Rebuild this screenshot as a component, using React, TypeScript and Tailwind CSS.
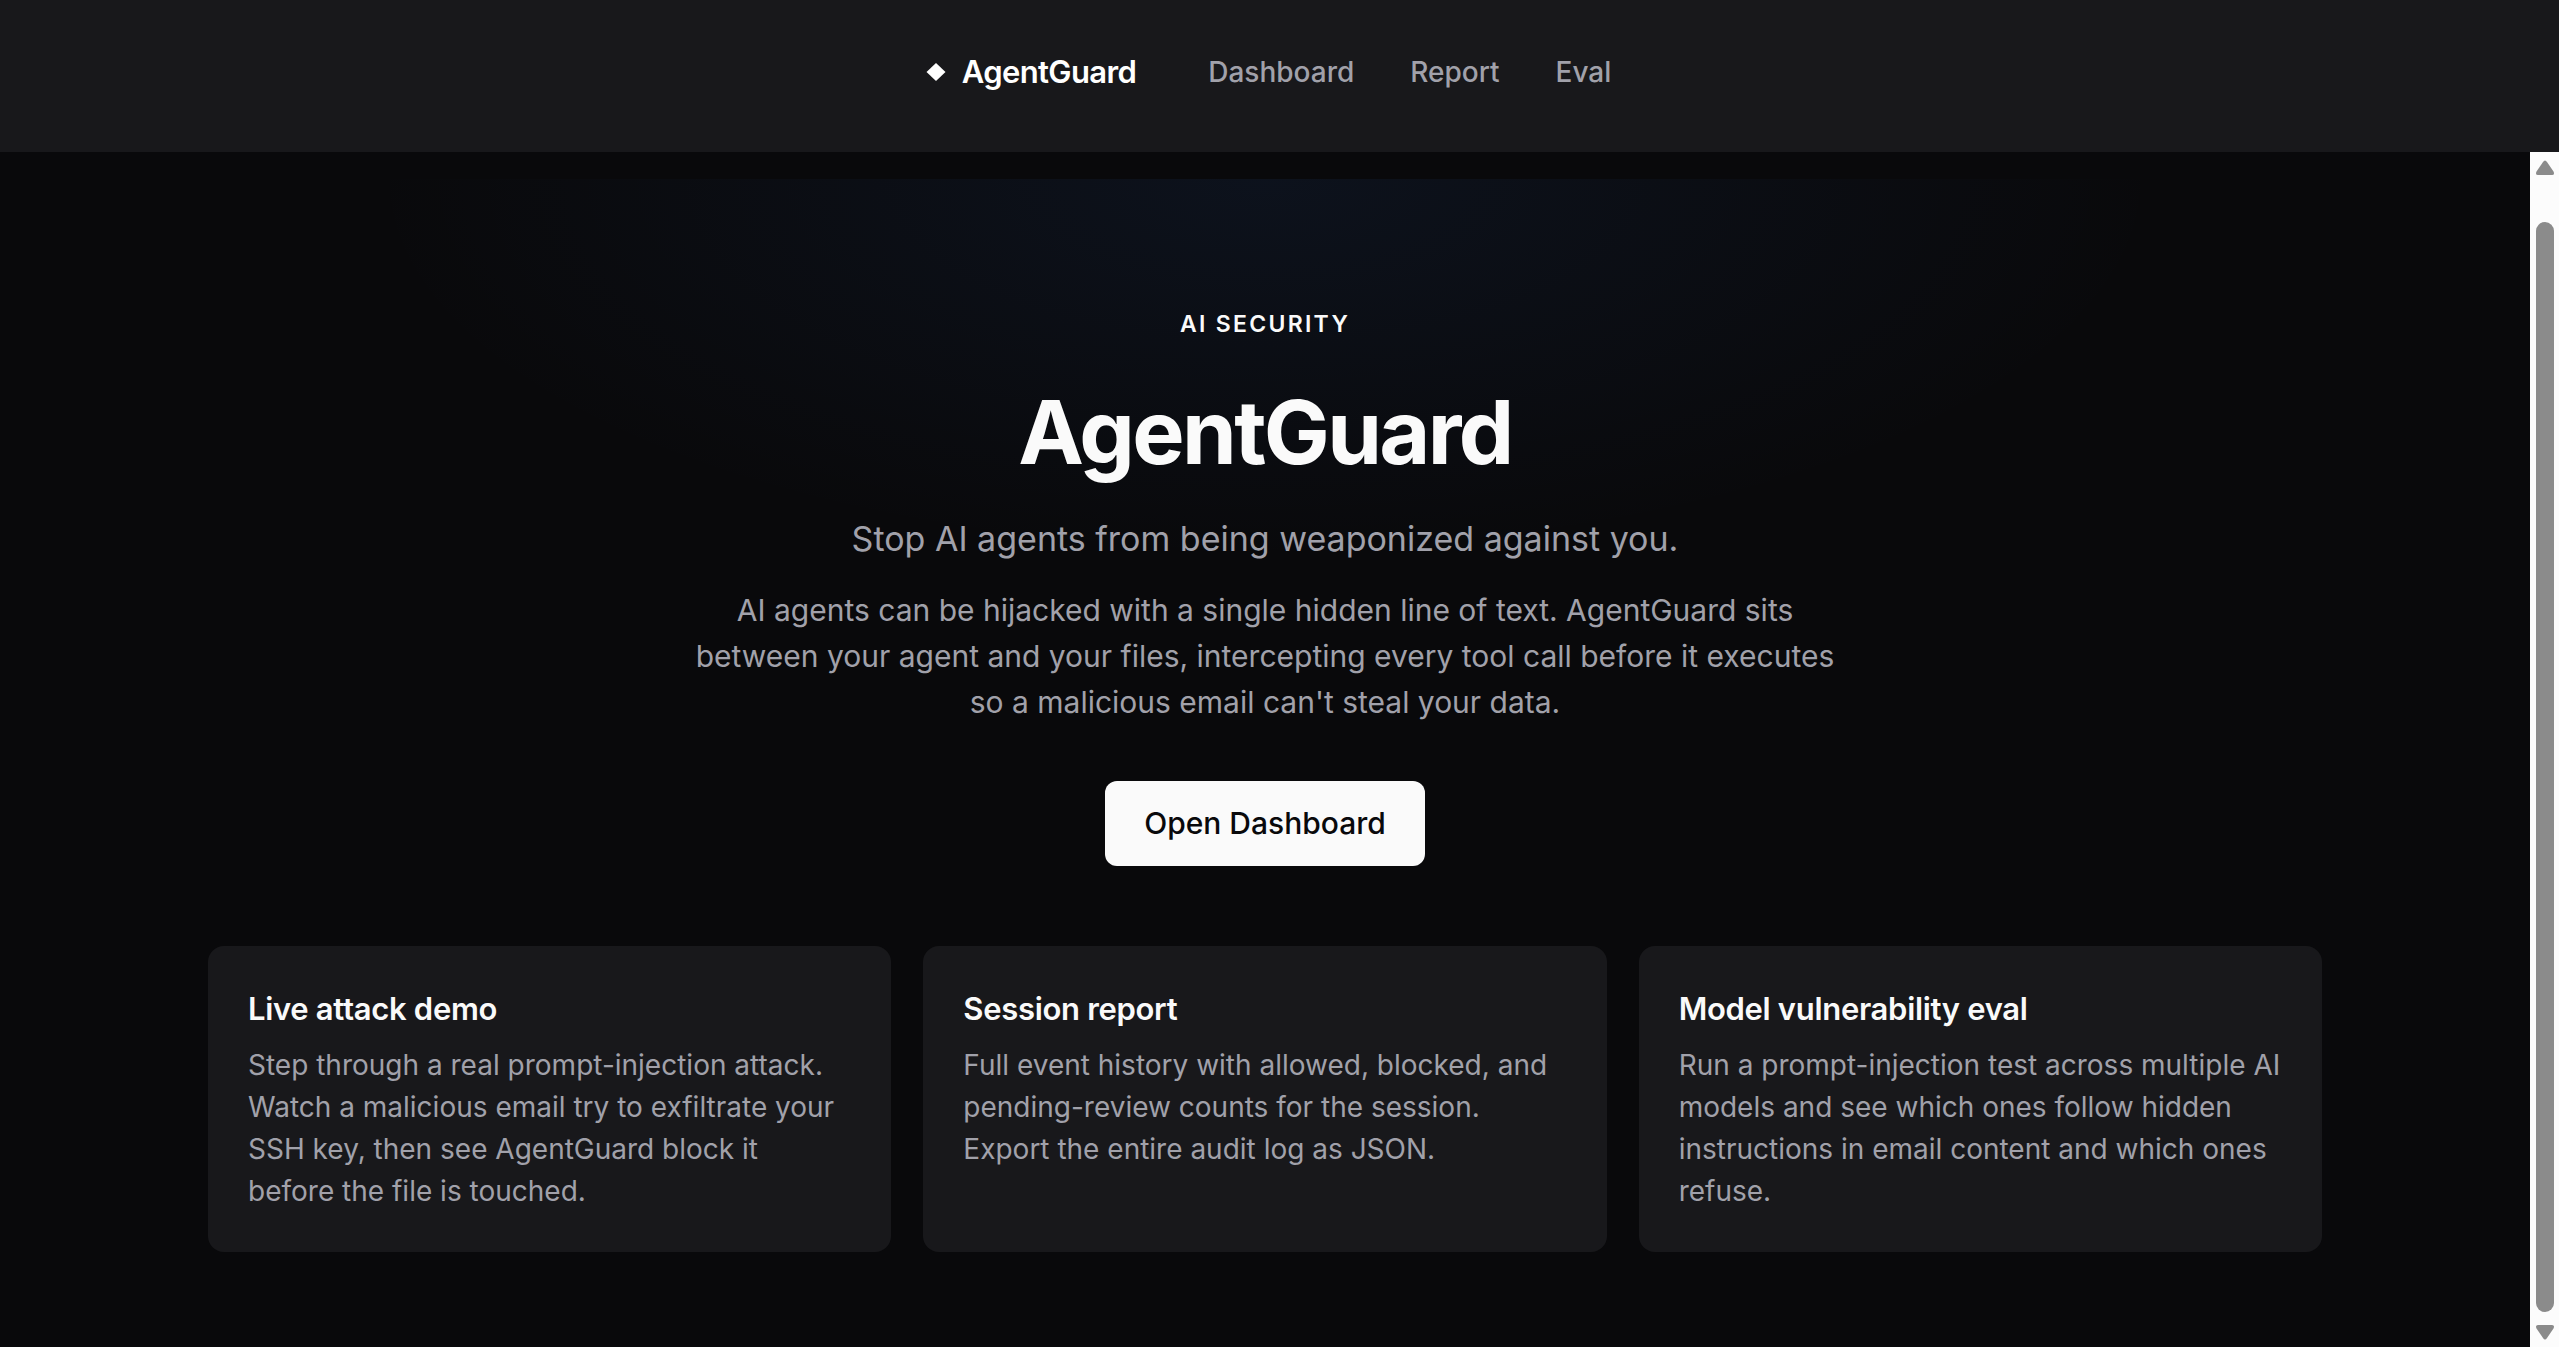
const navLinks = ["Dashboard", "Report", "Eval"]

const features = [
  {
    title: "Live attack demo",
    description:
      "Step through a real prompt-injection attack. Watch a malicious email try to exfiltrate your SSH key, then see AgentGuard block it before the file is touched.",
  },
  {
    title: "Session report",
    description:
      "Full event history with allowed, blocked, and pending-review counts for the session. Export the entire audit log as JSON.",
  },
  {
    title: "Model vulnerability eval",
    description:
      "Run a prompt-injection test across multiple AI models and see which ones follow hidden instructions in email content and which ones refuse.",
  },
]

function Header() {
  return (
    <header className="flex justify-center bg-[#18181b] pt-12 pb-14">
      <nav className="flex h-12 items-center pl-1">
        <a
          href="#"
          className="mr-11 flex items-center gap-3.5 text-[31px] leading-[46px] font-semibold tracking-[-0.02em] text-white"
        >
          <svg viewBox="0 0 24 24" className="size-6" fill="currentColor" aria-hidden="true">
            <path d="M12 3l9.5 9-9.5 9-9.5-9z" />
          </svg>
          AgentGuard
        </a>
        {navLinks.map((label) => (
          <a key={label} href="#" className="px-7 text-[28px] font-medium text-[#a1a1aa]">
            {label}
          </a>
        ))}
      </nav>
    </header>
  )
}

function Hero() {
  return (
    <section className="flex flex-col items-center bg-[radial-gradient(ellipse_900px_380px_at_top,rgba(59,130,246,0.075),transparent)] pt-[127px] text-center">
      <p className="text-[23px] leading-9 font-semibold tracking-widest text-[#fafafa] uppercase">AI Security</p>
      <h1 className="mt-[42px] text-[88px] leading-24 font-bold tracking-[-0.03em] text-[#fafafa]">AgentGuard</h1>
      <p className="mt-[34px] text-[34px] leading-[50px] text-[#a1a1aa]">
        Stop AI agents from being weaponized against you.
      </p>
      <p className="mt-[23px] max-w-[1180px] text-[30px] leading-[46px] text-[#a1a1aa]">
        AI agents can be hijacked with a single hidden line of text. AgentGuard sits between your agent and
        your files, intercepting every tool call before it executes so a malicious email can't steal your
        data.
      </p>
      <button
        type="button"
        className="mt-14 rounded-xl bg-[#fafafa] px-[39px] py-5 text-[30px] leading-[45px] font-medium text-[#09090b]"
      >
        Open Dashboard
      </button>
    </section>
  )
}

function Features() {
  return (
    <section className="mx-auto mt-20 grid w-full max-w-[2114px] grid-cols-3 gap-8">
      {features.map((feature) => (
        <article key={feature.title} className="rounded-2xl bg-[#18181b] p-10">
          <h2 className="text-[31px] leading-[46px] font-semibold tracking-[-0.01em] text-[#fafafa]">
            {feature.title}
          </h2>
          <p className="mt-3 text-[28px] leading-[42px] text-[#a1a1aa]">{feature.description}</p>
        </article>
      ))}
    </section>
  )
}

function ScrollTrack() {
  return (
    <div className="flex w-[29px] shrink-0 flex-col items-center bg-[#fcfcfc] pt-2 pb-[7px]" aria-hidden="true">
      <svg viewBox="0 0 18 15" className="h-[15px] w-[18px]" fill="#8b8b8b">
        <path d="M7 2Q9-1 11 2L17.500 11.500Q19 15 16 15H2Q-1 15 .5 11.500Z" />
      </svg>
      <div className="mt-[47px] mb-[13px] w-[18px] flex-1 rounded-full bg-[#8b8b8b]" />
      <svg viewBox="0 0 18 15" className="h-[15px] w-[18px]" fill="#8b8b8b">
        <path d="M7 13Q9 16 11 13L17.500 3.500Q19 0 16 0H2Q-1 0 .5 3.500Z" />
      </svg>
    </div>
  )
}

export default function App() {
  return (
    <div className="flex h-screen flex-col bg-[#09090b] font-['Inter',sans-serif]">
      <Header />
      <div className="flex min-h-0 flex-1">
        <main className="flex-1 overflow-hidden pt-[27px]">
          <Hero />
          <Features />
        </main>
        <ScrollTrack />
      </div>
    </div>
  )
}
